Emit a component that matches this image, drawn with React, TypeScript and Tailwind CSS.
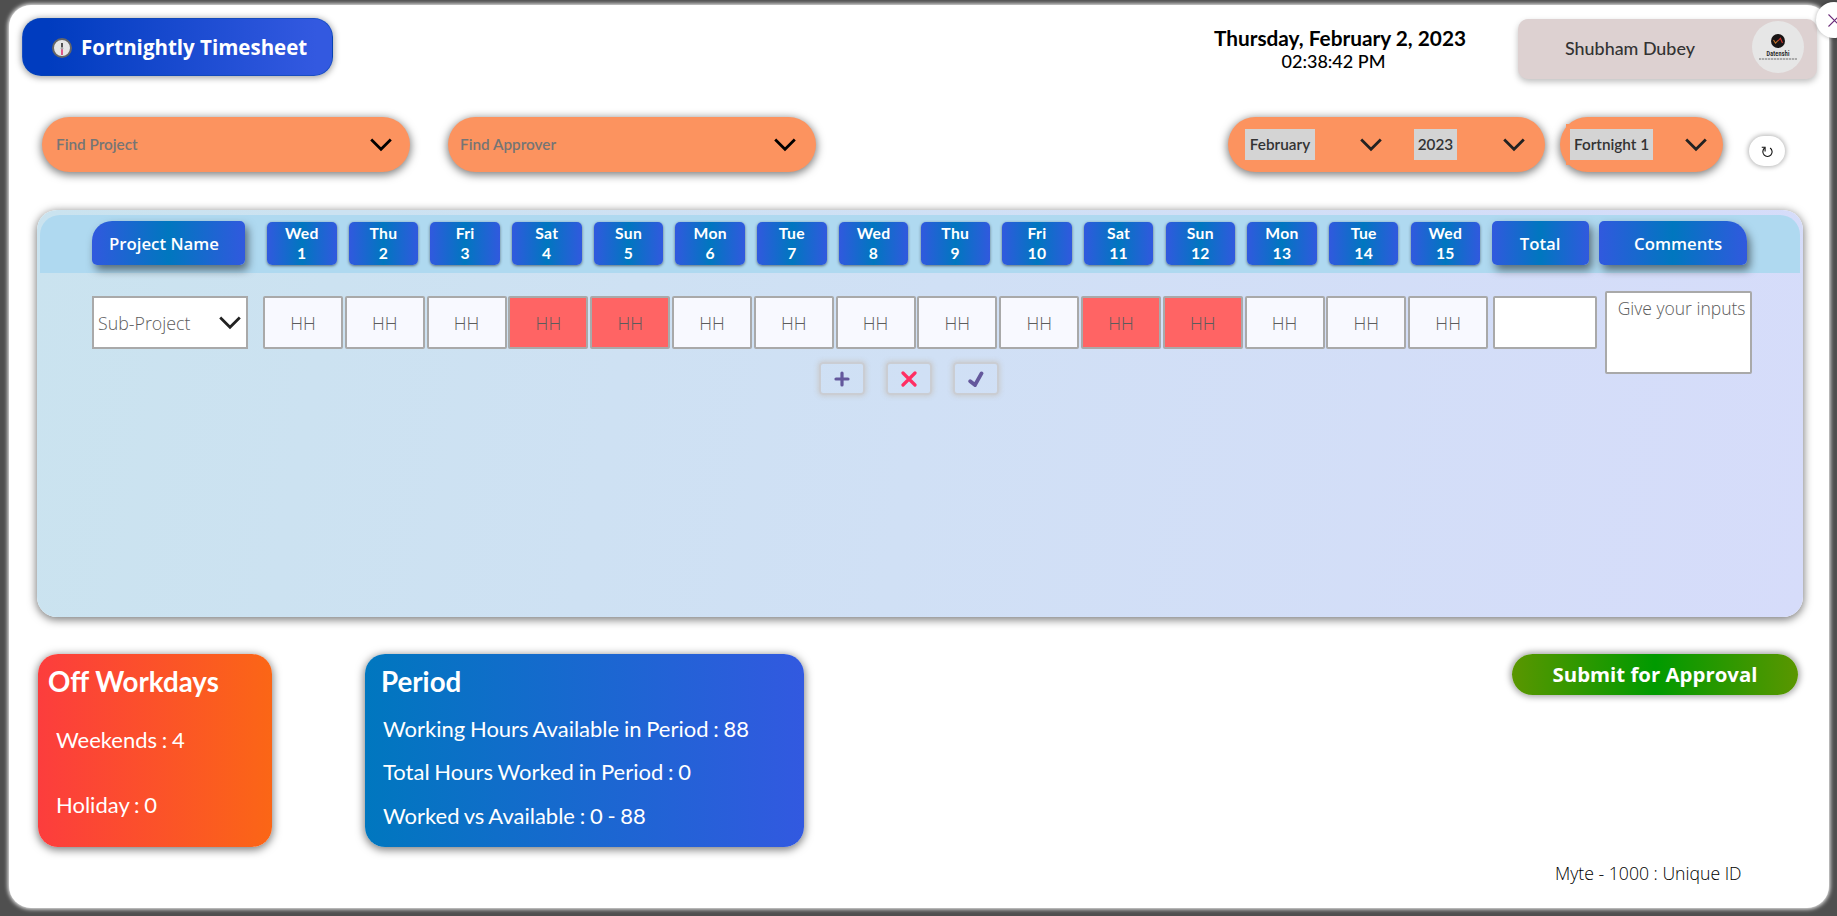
import React from "react";

const days: [string, number][] = [
  ["Wed", 1], ["Thu", 2], ["Fri", 3], ["Sat", 4], ["Sun", 5],
  ["Mon", 6], ["Tue", 7], ["Wed", 8], ["Thu", 9], ["Fri", 10],
  ["Sat", 11], ["Sun", 12], ["Mon", 13], ["Tue", 14], ["Wed", 15],
];

const headGradient = "bg-[linear-gradient(90deg,#3159de,#0077bf_50%,#3159de)]";
const pill =
  "flex h-[55px] shrink-0 items-center rounded-[28px] bg-[#fc935f] font-['Lato',sans-serif] text-[15.3px] font-semibold shadow-[0_2px_8px_1px_rgba(0,0,0,0.5)]";

function Chevron({ color = "#222" }: { color?: string }) {
  return (
    <svg className="h-[14px] w-[22px] shrink-0" viewBox="0 0 22 14" fill="none" stroke={color} strokeWidth="2.8">
      <path d="M1.2 1.6 L11 11.2 L20.8 1.6" />
    </svg>
  );
}

function ClockIcon() {
  return (
    <svg className="h-5 w-5 shrink-0" viewBox="0 0 20 20">
      <circle cx="10" cy="10" r="9" fill="#e6e6e6" stroke="#666" strokeWidth="2" />
      <path d="M10 5v5" stroke="#111" strokeWidth="1.4" />
      <path d="M10 11v6" stroke="#d81b60" strokeWidth="1.4" />
      <circle cx="10" cy="10.3" r="1.3" fill="#aaa" />
    </svg>
  );
}

function Avatar() {
  return (
    <div className="flex h-[52px] w-[52px] flex-col items-center rounded-full bg-[#e6e6e6] pt-[13px]">
      <svg className="h-[14px] w-[14px] shrink-0" viewBox="0 0 14 14">
        <circle cx="7" cy="7" r="7" fill="#181414" />
        <path d="M2.5 6l2 3.2L7 6.5" stroke="#c9772b" strokeWidth="1.1" fill="none" />
        <path d="M7 7l2.4-2.8L11.5 9" stroke="#d0342c" strokeWidth="1.1" fill="none" />
      </svg>
      <div className="mt-[2px] scale-x-[0.72] font-['Roboto',sans-serif] text-[7.5px] leading-[7px] font-bold tracking-[0.3px] text-[#222]">
        Datenshi
      </div>
      <div className="mt-[1px] h-[1.5px] w-[38px] bg-[repeating-linear-gradient(90deg,#aaa_0_2px,#d4d4d4_2px_3px)]" />
    </div>
  );
}

function Header() {
  return (
    <header className="flex items-start pt-[13px] pl-[13px]">
      <div className="flex h-[58px] w-[311px] shrink-0 items-center rounded-[19px] border border-[#0a47ad]/60 bg-[linear-gradient(90deg,#003cbf_8%,#3359e0_95%)] pt-px pl-[29px] shadow-[0_1px_6px_1px_rgba(0,0,0,0.35)]">
        <ClockIcon />
        <h1 className="ml-[9px] font-['Open_Sans',sans-serif] text-[20.5px] font-bold whitespace-nowrap text-white">
          Fortnightly Timesheet
        </h1>
      </div>
      <div className="mt-[8px] ml-[859px] w-[296px] shrink-0 text-center font-['Lato',sans-serif] text-black">
        <div className="text-[20.8px] leading-[24px] font-bold whitespace-nowrap">Thursday, February 2, 2023</div>
        <div className="mt-px pr-[13px] text-[18px] leading-[20px] font-medium">02:38:42 PM</div>
      </div>
      <div className="mt-px ml-[30px] flex h-[60px] w-[299px] shrink-0 items-start rounded-[10px] bg-[#ddd1d1] pl-[47px] shadow-[0_3px_6px_0_rgba(0,0,0,0.25)]">
        <div className="w-[163px] font-['Lato',sans-serif] text-[17.9px] leading-[58px] font-medium whitespace-nowrap text-[#333]">Shubham Dubey</div>
        <div className="ml-[24px] pt-[2px]">
          <Avatar />
        </div>
      </div>
    </header>
  );
}

function Filters() {
  const tag = "flex h-[31px] items-center justify-center bg-[#d4d4d4] text-[#333]";
  return (
    <div className="mt-[38px] flex items-start pl-[33px]">
      <div className={`${pill} w-[368px] justify-between pr-[18px] pl-[14px] text-[#757575]`}>
        Find Project
        <Chevron color="#000" />
      </div>
      <div className={`${pill} ml-[38px] w-[368px] justify-between pr-[20px] pl-[12px] text-[#757575]`}>
        Find Approver
        <Chevron color="#000" />
      </div>
      <div className={`${pill} ml-[412px] w-[317px] pl-[17px]`}>
        <div className={`${tag} w-[70px]`}>February</div>
        <div className="ml-[45px] flex"><Chevron /></div>
        <div className={`${tag} ml-[32px] w-[43px]`}>2023</div>
        <div className="ml-[46px] flex"><Chevron /></div>
      </div>
      <div className={`${pill} ml-[15px] w-[163px]`}>
        <div className="ml-[6px] flex h-[41px] items-center bg-[#fc935f] pl-[4px]">
          <div className={`${tag} w-[83px]`}>Fortnight 1</div>
        </div>
        <div className="ml-[32px] flex"><Chevron /></div>
      </div>
      <div className="mt-[19px] ml-[26px] flex h-[30px] w-[36px] items-center justify-center rounded-[15px] bg-white shadow-[0_0_5px_1px_rgba(0,0,0,0.3)]">
        <svg className="h-[13px] w-[13px]" viewBox="0 0 14 14" fill="none" stroke="#111" strokeWidth="1.2">
          <path d="M9.8 3.2A5 5 0 1 1 4 3.3" />
          <path d="M4.4 7V2.4H0.8" />
        </svg>
      </div>
    </div>
  );
}

function ActionButton({ children }: { children: React.ReactNode }) {
  return (
    <button className="flex h-[33px] w-[46px] items-center justify-center rounded-[4px] border-2 border-[#cacdd3] shadow-[0_0_5px_1px_rgba(200,200,200,0.9)]">
      <svg className="h-4 w-4" viewBox="0 0 16 16" fill="none" strokeWidth="3.2" strokeLinecap="round">
        {children}
      </svg>
    </button>
  );
}

function Sheet() {
  const wide =
    "flex h-[44px] shrink-0 items-center justify-center pt-px font-['Open_Sans',sans-serif] text-[16.8px] font-semibold whitespace-nowrap text-white shadow-[3px_5px_8px_0_rgba(0,0,0,0.5)]";
  const box = "h-[53px] shrink-0 border-2 border-[#a9a9a9] pt-px font-['Open_Sans',sans-serif] text-[17.8px] font-light text-[#5c5c5c]";
  return (
    <section className="mt-[38px] ml-[28px] h-[407px] w-[1766px] rounded-[20px] bg-[linear-gradient(100deg,#cae3ef,#d0e0f5_50%,#d6dcfa)] px-[3px] pt-[5px] shadow-[0_2px_8px_1px_rgba(0,0,0,0.5)]">
      <div className="flex h-[58px] items-start rounded-t-[20px] bg-[#afd9f0] pt-[6px] pl-[52px]">
        <div className={`${wide} ${headGradient} w-[153px] rounded-[5px] rounded-tl-[20px] pr-[9px]`}>Project Name</div>
        <div className="mt-px ml-[22px] flex gap-[12.2px]">
          {days.map(([name, n]) => (
            <div
              key={n}
              className={`${headGradient} flex h-[43px] w-[69.5px] shrink-0 flex-col items-center justify-center rounded-[5px] pb-px font-['Lato',sans-serif] text-[15.7px] leading-[20px] font-bold tracking-[0.3px] text-white shadow-[0_1px_3px_0_rgba(0,0,0,0.5)]`}
            >
              <span>{name}</span>
              <span>{n}</span>
            </div>
          ))}
        </div>
        <div className={`${wide} ${headGradient} ml-[11.5px] w-[97px] rounded-[5px]`}>Total</div>
        <div className={`${wide} ${headGradient} ml-[10.5px] w-[148px] rounded-[5px] rounded-tr-[20px] pl-[10px]`}>Comments</div>
      </div>
      <div className="flex h-[101px] items-start pt-[23px] pl-[52px]">
        <div className={`${box} flex w-[156px] items-center justify-between bg-white pr-[5px] pl-[4px]`}>
          Sub-Project
          <Chevron />
        </div>
        <div className="ml-[15px] flex gap-[1.8px]">
          {days.map(([name, n]) => (
            <div
              key={n}
              className={`${box} flex w-[80px] items-center justify-center rounded-[2px] ${name === "Sat" || name === "Sun" ? "bg-[#ff6464]" : "bg-[#f8f9ff]"}`}
            >
              HH
            </div>
          ))}
        </div>
        <div className={`${box} ml-[5px] w-[104px] rounded-[2px] bg-white`} />
        <div className="-mt-[5px] ml-[7.5px] h-[83px] w-[147px] shrink-0 rounded-[2px] border-2 border-[#a9a9a9] bg-white pt-[3px] pl-[11px] font-['Open_Sans',sans-serif] text-[17.5px] leading-[24px] font-light whitespace-nowrap text-[#5c5c5c]">
          Give your inputs
        </div>
      </div>
      <div className="-mt-[12px] flex gap-[21px] pl-[779px]">
        <ActionButton>
          <path d="M8 2v12M2 8h12" stroke="#64589c" />
        </ActionButton>
        <ActionButton>
          <path d="M2 2l12 12M14 2L2 14" stroke="#ff2e63" />
        </ActionButton>
        <ActionButton>
          <path d="M2.2 10.2L7 14L13.5 2.4" stroke="#64589c" strokeWidth="3.8" />
        </ActionButton>
      </div>
    </section>
  );
}

function Summary() {
  const card =
    "h-[193px] shrink-0 rounded-[20px] font-['Lato',sans-serif] text-[22px] text-white whitespace-nowrap shadow-[0_2px_8px_1px_rgba(0,0,0,0.5)]";
  const line = "pl-[8px] leading-[26px] [word-spacing:-0.9px]";
  const periodLine = "pl-[2px] leading-[26px] [word-spacing:-0.9px]";
  return (
    <div className="mt-[37px] flex items-start pl-[29px]">
      <div className={`${card} w-[234px] bg-[linear-gradient(90deg,#fc3d3d,#fb6616)] pt-[12px] pl-[10px]`}>
        <h2 className="text-[27.7px] leading-[32px] font-bold">Off Workdays</h2>
        <p className={`${line} mt-[29px]`}>Weekends : 4</p>
        <p className={`${line} mt-[39px]`}>Holiday : 0</p>
      </div>
      <div className={`${card} ml-[93px] w-[439px] bg-[linear-gradient(90deg,#0077bf,#3259e0)] pt-[12px] pl-[16px]`}>
        <h2 className="text-[27.7px] leading-[32px] font-bold">Period</h2>
        <p className={`${periodLine} mt-[18px]`}>Working Hours Available in Period : 88</p>
        <p className={`${periodLine} mt-[17px]`}>Total Hours Worked in Period : 0</p>
        <p className={`${periodLine} mt-[18px]`}>Worked vs Available : 0 - 88</p>
      </div>
      <div className="ml-[708px] flex w-[286px] shrink-0 flex-col">
        <button className="h-[41px] rounded-[21px] bg-[linear-gradient(90deg,#5a9600,#009a00_50%,#5a9600)] pb-px text-center font-['Open_Sans',sans-serif] text-[20.4px] leading-[39px] font-bold text-white shadow-[0_0_6px_2px_rgba(0,0,0,0.35)]">
          Submit for Approval
        </button>
        <div className="mt-[166px] pl-[43px] font-['Open_Sans',sans-serif] text-[17.65px] leading-[24px] font-light whitespace-nowrap text-black">
          Myte - 1000 : Unique ID
        </div>
      </div>
    </div>
  );
}

export default function App() {
  return (
    <div className="relative h-[916px] w-[1837px] overflow-hidden bg-[#4f4f4f] pt-[5px] pl-[9px]">
      <main className="h-[903px] w-[1820px] rounded-[22px] bg-white shadow-[0_0_4px_1px_#fff]">
        <Header />
        <Filters />
        <Sheet />
        <Summary />
      </main>
      <button className="absolute top-[2px] left-[1816px] flex h-[36px] w-[36px] items-center justify-center rounded-full bg-white shadow-[0_0_4px_rgba(0,0,0,0.3)]">
        <svg className="h-[13px] w-[13px]" viewBox="0 0 13 13" stroke="#6a2a78" strokeWidth="1.1">
          <path d="M0.5 0.5l12 12M12.5 0.5l-12 12" />
        </svg>
      </button>
    </div>
  );
}
